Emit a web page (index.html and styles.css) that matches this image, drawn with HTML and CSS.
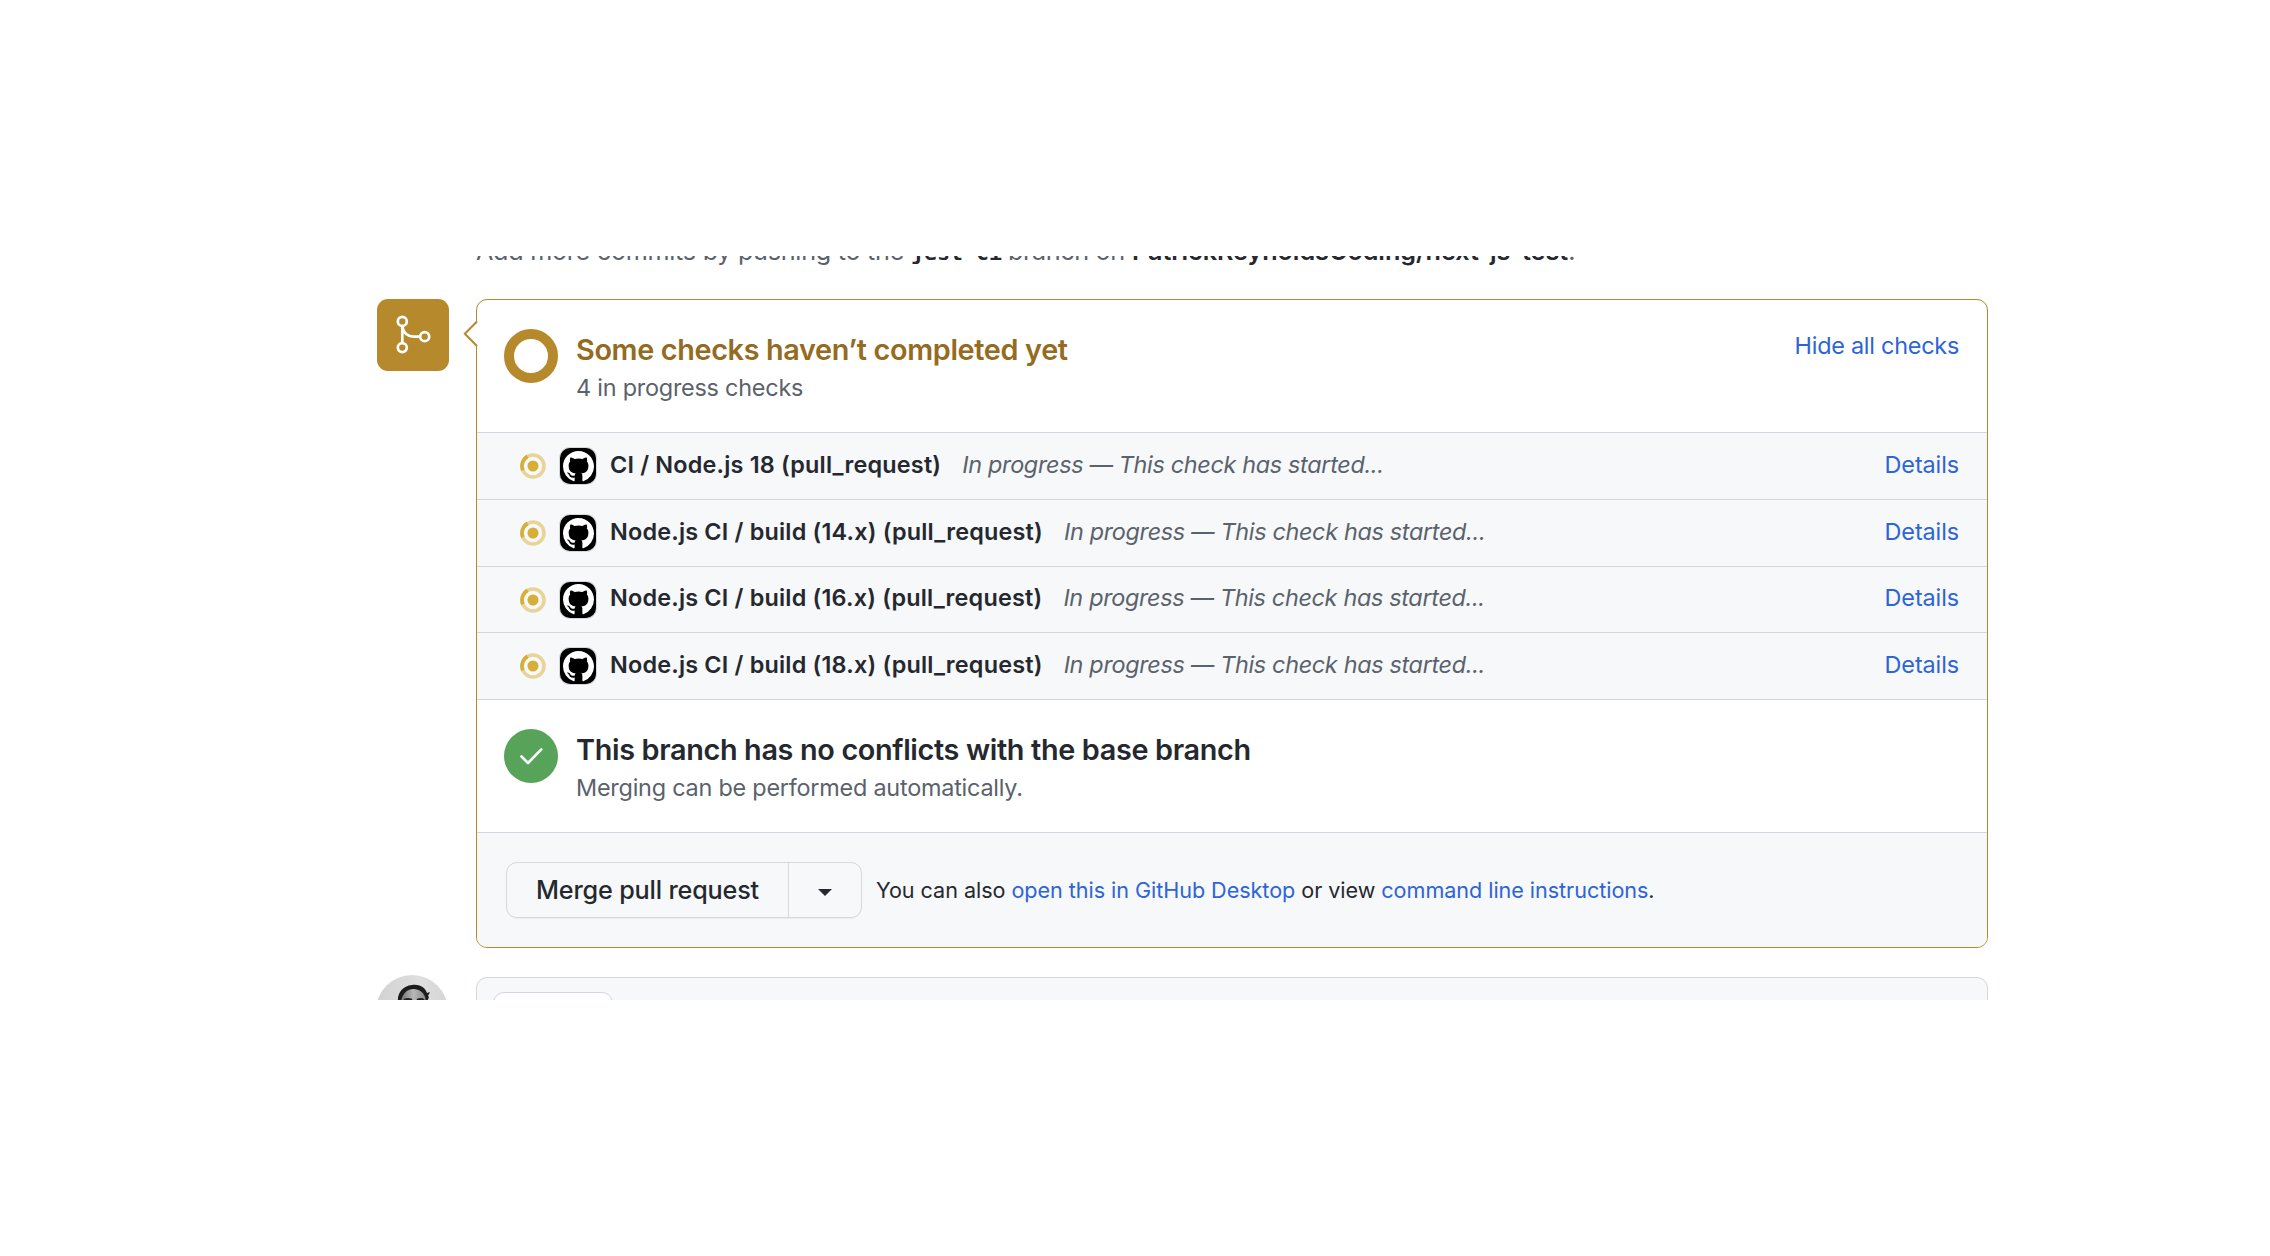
FILE: index.html
```html
<!DOCTYPE html>
<html lang="en">
<head>
<meta charset="utf-8">
<title>Pull request checks</title>
<link rel="stylesheet" href="styles.css">
</head>
<body>
<svg width="0" height="0" class="defs">
  <symbol id="spinner" viewBox="0 0 26 26">
    <circle cx="13" cy="13" r="11" fill="none" stroke="#e8d499" stroke-width="3.6"/>
    <path d="M2.9 17.4A11 11 0 0 1 7.6 3.4" fill="none" stroke="#d6ae38" stroke-width="3.6"/>
    <circle cx="13" cy="13" r="5.5" fill="#d6ae38"/>
  </symbol>
  <symbol id="mark" viewBox="0 0 16 16">
    <path fill="#fff" d="M8 0c4.42 0 8 3.58 8 8a8.013 8.013 0 0 1-5.45 7.59c-.4.08-.55-.17-.55-.38 0-.27.01-1.13.01-2.2 0-.75-.25-1.23-.54-1.48 1.78-.2 3.65-.88 3.65-3.95 0-.88-.31-1.59-.82-2.15.08-.2.36-1.02-.08-2.12 0 0-.67-.22-2.2.82-.64-.18-1.32-.27-2-.27-.68 0-1.36.09-2 .27-1.53-1.03-2.2-.82-2.2-.82-.44 1.1-.16 1.92-.08 2.12-.51.56-.82 1.28-.82 2.15 0 3.06 1.86 3.75 3.64 3.95-.23.2-.44.55-.51 1.07-.46.21-1.61.55-2.33-.66-.15-.24-.6-.83-1.23-.82-.67.01-.27.38.01.53.34.19.73.9.82 1.13.16.45.68 1.31 2.69.94 0 .67.01 1.3.01 1.49 0 .21-.15.45-.55.38A7.995 7.995 0 0 1 0 8c0-4.42 3.58-8 8-8Z"/>
  </symbol>
</svg>
<main class="viewport">
  <p class="push-hint"><span class="hint-a">Add more commits by pushing to the</span><code>jest-ci</code><span class="hint-b">branch on</span><span class="hint-repo"><strong>PatrickReynoldsCoding/next-js-test</strong>.</span></p>

  <div class="merge">
    <div class="badge">
      <svg width="72" height="72" viewBox="0 0 72 72" fill="none" stroke="#fff" stroke-width="2.7">
        <circle cx="25.3" cy="22.4" r="4.5"/>
        <circle cx="25.3" cy="48.6" r="4.5"/>
        <circle cx="47.7" cy="37.7" r="4.5"/>
        <path d="M25.3 27v17M25.3 27.500c1 6.500 5.600 10.200 12 10.200h5.800"/>
      </svg>
    </div>
    <section class="box">
      <svg class="pointer" width="15" height="28" viewBox="0 0 15 28">
        <path d="M15 1.500 2 14l13 12.500z" fill="#fff"/>
        <path d="M14 1.500 1.800 13.700 14 26" fill="none" stroke="#b5892c" stroke-width="2"/>
      </svg>
      <div class="status">
        <span class="ring"></span>
        <div class="words">
          <h2 class="pending">Some checks haven’t completed yet</h2>
          <p>4 in progress checks</p>
        </div>
        <a class="toggle">Hide all checks</a>
      </div>
      <div class="check">
        <svg class="spin" width="26" height="26"><use href="#spinner"/></svg>
        <span class="app"><svg width="31" height="31"><use href="#mark"/></svg></span>
        <strong>CI / Node.js 18 (pull_request)</strong>
        <em>In progress — This check has started...</em>
        <a>Details</a>
      </div>
      <div class="check">
        <svg class="spin" width="26" height="26"><use href="#spinner"/></svg>
        <span class="app"><svg width="31" height="31"><use href="#mark"/></svg></span>
        <strong>Node.js CI / build (14.x) (pull_request)</strong>
        <em>In progress — This check has started...</em>
        <a>Details</a>
      </div>
      <div class="check short">
        <svg class="spin" width="26" height="26"><use href="#spinner"/></svg>
        <span class="app"><svg width="31" height="31"><use href="#mark"/></svg></span>
        <strong>Node.js CI / build (16.x) (pull_request)</strong>
        <em>In progress — This check has started...</em>
        <a>Details</a>
      </div>
      <div class="check">
        <svg class="spin" width="26" height="26"><use href="#spinner"/></svg>
        <span class="app"><svg width="31" height="31"><use href="#mark"/></svg></span>
        <strong>Node.js CI / build (18.x) (pull_request)</strong>
        <em>In progress — This check has started...</em>
        <a>Details</a>
      </div>
      <div class="status">
        <svg class="ok" width="54" height="54" viewBox="0 0 54 54">
          <circle cx="27" cy="27" r="27" fill="#57a35a"/>
          <path d="M17.500 27.500 24 34 37.300 20.400" fill="none" stroke="#fff" stroke-width="2.600" stroke-linecap="round" stroke-linejoin="round"/>
        </svg>
        <div class="words">
          <h2>This branch has no conflicts with the base branch</h2>
          <p>Merging can be performed automatically.</p>
        </div>
      </div>
      <div class="actions">
        <div class="button-group">
          <span class="merge-button">Merge pull request</span>
          <span class="menu-button"><svg width="14" height="7" viewBox="0 0 14 7"><path d="M0 0h14L7 7z" fill="#25282e"/></svg></span>
        </div>
        <p>You can also <a>open this in GitHub Desktop</a> or view <a>command line instructions</a>.</p>
      </div>
    </section>
  </div>

  <div class="comment">
    <svg class="avatar" width="72" height="72" viewBox="0 0 72 72">
      <defs>
        <linearGradient id="wall"><stop offset="0" stop-color="#d2d2d2"/><stop offset=".6" stop-color="#dedede"/><stop offset="1" stop-color="#d6d6d6"/></linearGradient>
        <linearGradient id="skin"><stop offset="0" stop-color="#777"/><stop offset=".5" stop-color="#b8b8b8"/><stop offset="1" stop-color="#8a8a8a"/></linearGradient>
      </defs>
      <circle cx="36" cy="36" r="36" fill="url(#wall)"/>
      <path d="M22 27c-1-8 4-16 14-17 9-1 13 3 15 8l3-1-2 4 1 1-2 5z" fill="#1c1c1c"/>
      <path d="M25.500 40V24c2-6 6-10 12-10 6 0 11 4 12 10v16z" fill="url(#skin)"/>
      <path d="M28 25q4-2 8 0M41 25q4-2 7 0" fill="none" stroke="#222" stroke-width="2"/>
    </svg>
    <div class="comment-box"><div class="tab"></div></div>
  </div>
</main>
</body>
</html>
```
FILE: styles.css
```css
* { box-sizing: border-box; }
body { margin: 0; background: #fff; color: #25282e; font: 23.4px/36px Inter, sans-serif; }
h2, p { margin: 0; }
a { color: #2d64d8; }
.defs { display: block; }
svg { flex: none; display: block; }

.viewport { width: 1613px; height: 744px; margin: 256px 0 0 376px; overflow: hidden; white-space: nowrap; }

.push-hint { display: flex; align-items: baseline; height: 30px; margin: -20px 0 33px 100px; font-size: 25.2px; line-height: 30px; color: #5a626c; }
.push-hint strong { font-weight: 600; letter-spacing: -.04px; color: #25282e; }
.push-hint code { width: 97px; font: bold 21.6px/30px "DejaVu Sans Mono", monospace; color: #25282e; }
.hint-a { width: 435px; letter-spacing: -.28px; }
.hint-b { width: 124px; letter-spacing: -.4px; }

.merge { display: flex; gap: 27px; padding-left: 1px; }
.badge { flex: none; width: 72px; height: 72px; border-radius: 11px; background: #b5892c; }
.box { position: relative; width: 1512px; height: 649px; border: 1px solid #b5892c; border-radius: 11px; background: #fff; }
.pointer { position: absolute; left: -14px; top: 20px; }

.status { display: flex; height: 133px; padding: 29px 28px 0 27px; border-bottom: 1px solid #d0d7de; }
.ring { width: 54px; height: 54px; border: 10.8px solid #b5892c; border-radius: 50%; }
.words { margin-left: 18px; }
.words h2 { font-size: 28.8px; font-weight: 600; line-height: 41px; letter-spacing: -.34px; }
.words .pending { color: #946b21; }
.words p { line-height: 35px; letter-spacing: -.22px; color: #5a626c; }
.toggle { margin: -1px 0 0 auto; letter-spacing: -.24px; }

.check { display: flex; align-items: center; height: 67px; padding: 0 28px 0 43px; border-bottom: 1px solid #d0d7de; background: #f6f8fa; }
.check.short { height: 66px; }
.app { display: flex; align-items: center; justify-content: center; width: 36px; height: 36px; margin: 0 14px 0 14px; border-radius: 10px; background: #000; box-shadow: 0 0 0 1px #d5d8d9; }
.check strong, .check em, .check a { padding-bottom: 3px; }
.check strong { font-weight: 600; letter-spacing: .2px; }
.check em { margin-left: 21px; letter-spacing: -.32px; color: #5a626c; }
.check a { margin-left: auto; letter-spacing: -.1px; }

.actions { display: flex; align-items: center; height: 114px; padding-left: 29px; border-radius: 0 0 10px 10px; background: #f6f8fa; }
.actions p { margin-left: 14px; font-size: 21.6px; letter-spacing: -.05px; }
.button-group { display: flex; width: 356px; height: 56px; border: 1px solid #d5d8dc; border-radius: 11px; box-shadow: 0 1px 1px rgba(27, 31, 36, .05); }
.merge-button { width: 282px; padding-left: 29px; border-right: 1px solid #d5d8dc; font-size: 25.2px; font-weight: 500; line-height: 54px; letter-spacing: -.17px; }
.menu-button { display: flex; flex: 1; align-items: center; justify-content: center; padding-top: 5px; }

.comment { display: flex; gap: 28px; margin-top: 27px; }
.comment-box { width: 1512px; height: 72px; margin-top: 2px; padding: 14px 16px; border: 1px solid #d0d7de; border-radius: 11px; background: #f6f8fa; }
.tab { width: 120px; height: 50px; border: 1px solid #d0d7de; border-radius: 11px; background: #fff; }
```
